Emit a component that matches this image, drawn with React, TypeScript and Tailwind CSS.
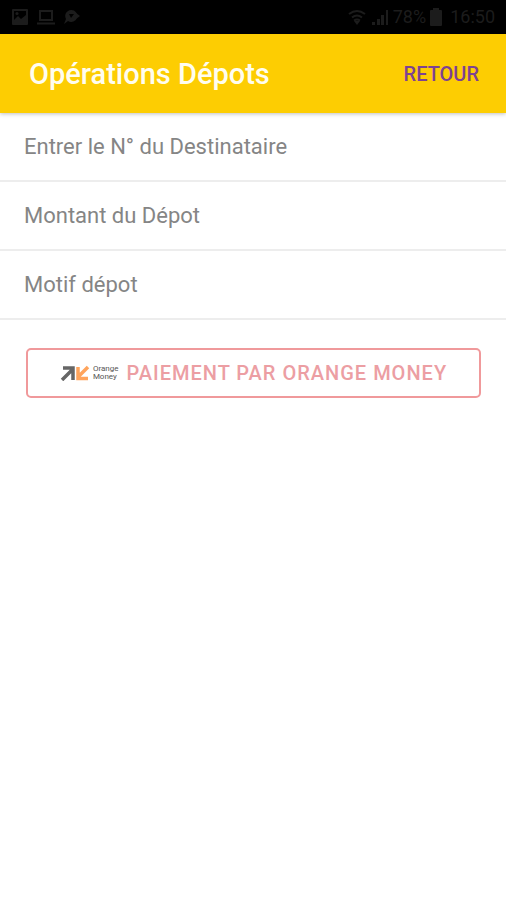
import React from 'react';

const fields = [
  { id: 'recipient', label: 'Entrer le N° du Destinataire', mode: 'tel' as const },
  { id: 'amount', label: 'Montant du Dépot', mode: 'decimal' as const },
  { id: 'reason', label: 'Motif dépot', mode: 'text' as const },
];

function StatusBar() {
  return (
    <div className="flex h-[34px] items-center justify-between bg-black px-[11px] text-[#1c1c1c]">
      <div className="flex items-center gap-2">
        <svg className="h-[18px] w-[18px]" viewBox="0 0 18 18" aria-hidden="true">
          <path fill="currentColor" fillRule="evenodd" d="M2 1h14q1 0 1 1v14q0 1-1 1H2q-1 0-1-1V2q0-1 1-1ZM3 3v9l4-4 3 3 5-4V3H3Z" />
          <circle cx="6" cy="5.500" r="1.500" fill="currentColor" />
        </svg>
        <svg className="h-[18px] w-[18px]" viewBox="0 0 18 18" fill="none" stroke="currentColor" strokeWidth="2" aria-hidden="true">
          <path d="M3 3h12v9H3zM0 15.500h18" />
        </svg>
        <svg className="h-[18px] w-[18px]" viewBox="0 0 18 18" aria-hidden="true">
          <path fill="currentColor" fillRule="evenodd" d="M8 2a6 6 0 1 1-3 11l-4 3 2-5A6 6 0 0 1 8 2Zm-2 4 2 4 3-4H6Z" />
          <path fill="currentColor" d="m13 5 4 3-4 3z" />
        </svg>
      </div>
      <div className="flex items-center gap-1 text-lg leading-none">
        <svg className="h-[18px] w-5" viewBox="0 0 20 18" fill="none" stroke="currentColor" strokeWidth="2" aria-hidden="true">
          <path d="M2 6q8-6 16 0M5 9.500q5-4 10 0M7 12.500q3-2 6 0" />
          <path fill="currentColor" stroke="none" d="m7 13 3 4 3-4z" />
        </svg>
        <svg className="h-[18px] w-[18px]" viewBox="0 0 18 18" fill="currentColor" aria-hidden="true">
          <path d="M1 14h3v3H1zM6 11h3v6H6zM10 7h3v10h-3zM15 2h2v15h-2z" />
        </svg>
        <span>78%</span>
        <svg className="h-[18px] w-3" viewBox="0 0 12 18" fill="currentColor" aria-hidden="true">
          <path d="M3 0h6v2h2q1 0 1 1v14q0 1-1 1H1q-1 0-1-1V3q0-1 1-1h2z" />
        </svg>
        <span className="ml-1">16:50</span>
      </div>
    </div>
  );
}

function OrangeMoneyLogo() {
  return (
    <span className="flex items-center gap-[3px]">
      <svg className="h-4 w-[30px]" viewBox="0 0 30 16" fill="none" strokeWidth="3.5" aria-hidden="true">
        <path stroke="#666" d="M2 15 12 5M3 3h10v12" />
        <path stroke="#ffa45c" d="M28 2 18.500 11.500M18 2v11.500h10" />
      </svg>
      <span className="flex flex-col text-left text-[8px] leading-[8px] font-normal text-[#555]">
        <span>Orange</span>
        <span>Money</span>
      </span>
    </span>
  );
}

export default function App() {
  return (
    <div className="min-h-screen bg-white font-['Roboto',sans-serif]">
      <StatusBar />
      <header className="relative flex h-[79px] items-center justify-between bg-[#fdcd02] pr-[27px] pl-[29px] shadow-[0_1px_4px_rgba(0,0,0,0.25)]">
        <h1 className="text-[29px] leading-8 font-medium text-[#fffdf0]">Opérations Dépots</h1>
        <button type="button" className="text-xl leading-6 font-medium text-[#7d4293]">
          RETOUR
        </button>
      </header>
      <form onSubmit={(e) => e.preventDefault()}>
        {fields.map((f) => (
          <div key={f.id} className="border-b-2 border-[#ededed]">
            <input
              id={f.id}
              aria-label={f.label}
              placeholder={f.label}
              inputMode={f.mode}
              className="block h-[67px] w-full px-6 text-[22px] text-[#555] outline-none placeholder:text-[#858585]"
            />
          </div>
        ))}
        <div className="pt-7 pr-[25px] pl-[26px]">
          <button
            type="submit"
            className="flex h-[50px] w-full items-center justify-center gap-2 rounded-[5px] border-2 border-[#f0999b] text-xl font-medium text-[#ec9ea3]"
          >
            <OrangeMoneyLogo />
            <span className="tracking-wider">PAIEMENT PAR ORANGE MONEY</span>
          </button>
        </div>
      </form>
    </div>
  );
}
